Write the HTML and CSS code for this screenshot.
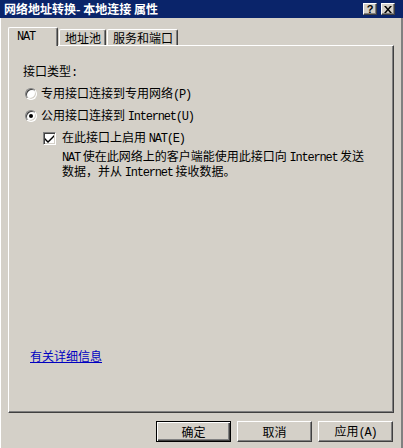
FILE: index.html
```html
<!DOCTYPE html>
<html>
<head>
<meta charset="utf-8">
<link rel="stylesheet" href="styles.css">
</head>
<body>
<div class="window">
  <div class="titlebar">
    <span class="title">网络地址转换- 本地连接 属性</span>
    <div class="tbtns">
      <span class="tbtn">?</span>
      <span class="tbtn x">
        <svg width="8" height="7" viewBox="0 0 8 7"><path d="M0 0h2l2 2.5L6 0h2L5 3.5 8 7H6L4 4.5 2 7H0l3-3.5z" fill="#000"/></svg>
      </span>
    </div>
  </div>
  <div class="content">
    <div class="tabs">
      <div class="tab active"><span class="m">NAT</span></div>
      <div class="tab">地址池</div>
      <div class="tab">服务和端口</div>
    </div>
    <div class="panel">
      <div class="label">接口类型<span class="m">:</span></div>
      <div class="row r1"><span class="radio"></span><span>专用接口连接到专用网络<span class="m">(P)</span></span></div>
      <div class="row r2"><span class="radio on"></span><span>公用接口连接到 <span class="m">Internet(U)</span></span></div>
      <div class="row chk"><span class="checkbox"><svg width="9" height="9" viewBox="0 0 9 9"><path d="M0 4l3 3 6-6v2l-6 6-3-3z" fill="#000"/></svg></span><span>在此接口上启用 <span class="m">NAT(E)</span></span></div>
      <div class="desc">
        <div class="dline"><span class="m">NAT</span> 使在此网络上的客户端能使用此接口向 <span class="m">Internet</span> 发送</div>
        <div class="dline">数据，并从 <span class="m">Internet</span> 接收数据。</div>
      </div>
      <a class="link">有关详细信息</a>
    </div>
    <div class="buttons">
      <div class="btn default"><span>确定</span></div>
      <div class="btn"><span>取消</span></div>
      <div class="btn"><span>应用<span class="m">(A)</span></span></div>
    </div>
  </div>
</div>
</body>
</html>
```
FILE: styles.css
```css
html, body {
  margin: 0;
  padding: 0;
}
body {
  width: 403px;
  height: 448px;
  overflow: hidden;
  font-family: "Noto Sans CJK SC", sans-serif;
  font-size: 12px;
  color: #000;
  background: #d4d0c8;
}
.m {
  font-family: "Liberation Mono", monospace;
  font-size: 12px;
  letter-spacing: -1.2px;
}
.window {
  width: 403px;
  height: 448px;
  box-sizing: border-box;
  background: #d4d0c8;
  border-right: 2px solid #808080;
  border-left: 1px solid #ffffff;
}
.titlebar {
  height: 18px;
  background: #0a246a;
  display: flex;
  align-items: center;
  justify-content: space-between;
  padding: 0 4px 0 4px;
  margin-left: -1px;
  margin-right: -2px;
}
.title {
  color: #fff;
  font-weight: bold;
  font-size: 12px;
  line-height: 14px;
  white-space: nowrap;
}
.tbtns {
  display: flex;
  gap: 4px;
  margin-right: 4px;
}
.tbtn {
  width: 14px;
  height: 12px;
  box-sizing: border-box;
  background: #d4d0c8;
  border-top: 1px solid #fff;
  border-left: 1px solid #fff;
  border-right: 1px solid #404040;
  border-bottom: 1px solid #404040;
  box-shadow: inset -1px -1px 0 #808080;
  display: flex;
  align-items: center;
  justify-content: center;
  font-family: "Liberation Sans", sans-serif;
  font-weight: bold;
  font-size: 11px;
  line-height: 10px;
}
.content {
  padding: 9px 0 0 7px;
}
.tabs {
  display: flex;
  height: 18px;
  align-items: flex-end;
}
.tab {
  height: 16px;
  box-sizing: border-box;
  padding: 0 4px 0 5px;
  border-top: 1px solid #fff;
  border-left: 1px solid #fff;
  border-right: 1px solid #404040;
  box-shadow: inset -1px 0 0 #808080;
  border-radius: 2px 2px 0 0;
  display: flex;
  align-items: center;
  line-height: 14px;
  margin-left: 1px;
  white-space: nowrap;
}
.tab.active {
  height: 19px;
  width: 50px;
  margin-bottom: -1px;
  padding-left: 8px;
  margin-left: 0;
  background: #d4d0c8;
  position: relative;
  z-index: 1;
  align-items: flex-start;
  padding-top: 2px;
}
.panel {
  width: 386px;
  height: 368px;
  box-sizing: border-box;
  border-top: 1px solid #fff;
  border-left: 1px solid #fff;
  border-right: 1px solid #404040;
  border-bottom: 1px solid #404040;
  box-shadow: inset -1px -1px 0 #808080;
  display: flex;
  flex-direction: column;
  padding: 18px 0 49px 0;
}
.label {
  line-height: 14px;
  margin-left: 14px;
}
.row {
  display: flex;
  align-items: center;
  line-height: 14px;
  height: 14px;
  white-space: nowrap;
}
.r1 { margin: 7px 0 0 16px; gap: 4px; }
.r2 { margin: 8px 0 0 16px; gap: 4px; }
.chk { margin: 8px 0 0 34px; gap: 6px; }
.radio {
  width: 12px;
  height: 12px;
  box-sizing: border-box;
  border-radius: 50%;
  background: #fff;
  border: 1px solid;
  border-color: #808080 #fff #fff #808080;
  box-shadow: inset 1px 1px 0 #404040, inset -1px -1px 0 #d4d0c8;
  display: flex;
  align-items: center;
  justify-content: center;
}
.radio.on::after {
  content: "";
  width: 4px;
  height: 4px;
  border-radius: 50%;
  background: #000;
}
.checkbox {
  width: 13px;
  height: 13px;
  box-sizing: border-box;
  background: #fff;
  border: 1px solid;
  border-color: #808080 #fff #fff #808080;
  box-shadow: inset 1px 1px 0 #404040, inset -1px -1px 0 #d4d0c8;
  display: flex;
  align-items: center;
  justify-content: center;
}
.desc {
  margin: 3px 0 0 53px;
  display: flex;
  flex-direction: column;
}
.dline {
  line-height: 15px;
  height: 15px;
  white-space: nowrap;
}
.link {
  margin-top: auto;
  margin-left: 21px;
  line-height: 14px;
  color: #0000c0;
  text-decoration: underline;
  align-self: flex-start;
}
.buttons {
  display: flex;
  justify-content: flex-end;
  gap: 6px;
  width: 386px;
  margin-top: 8px;
  box-sizing: border-box;
  padding-right: 1px;
}
.btn {
  width: 75px;
  height: 21px;
  box-sizing: border-box;
  background: #d4d0c8;
  border-top: 1px solid #fff;
  border-left: 1px solid #fff;
  border-right: 1px solid #404040;
  border-bottom: 1px solid #404040;
  box-shadow: inset -1px -1px 0 #808080;
  display: flex;
  align-items: center;
  justify-content: center;
  line-height: 14px;
}
.btn.default {
  border: 1px solid #000;
  box-shadow: inset 1px 1px 0 #fff, inset -1px -1px 0 #404040, inset -2px -2px 0 #808080;
}
```
